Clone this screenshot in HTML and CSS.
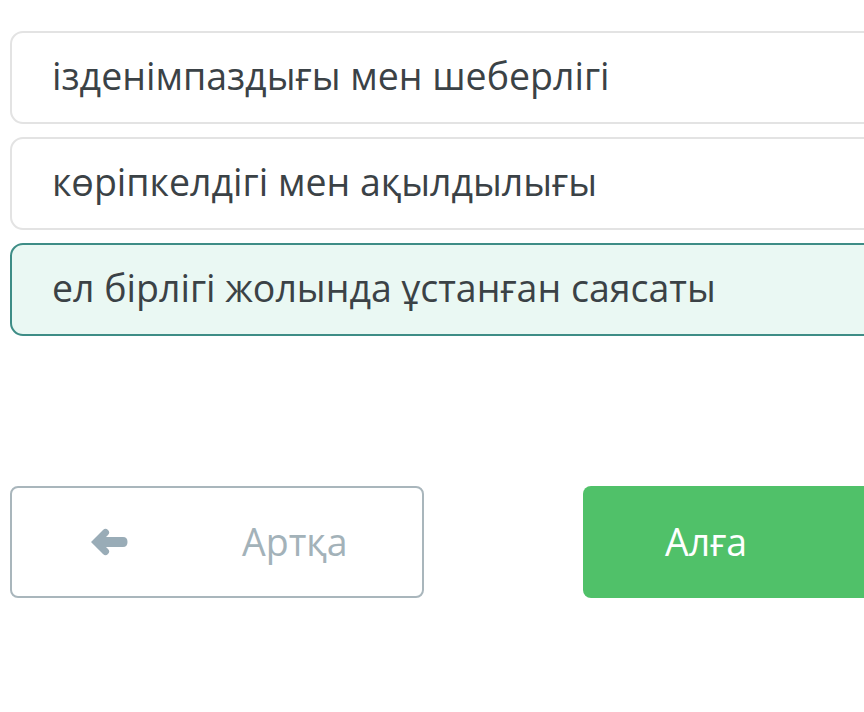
FILE: index.html
```html
<!DOCTYPE html>
<html>
<head>
<meta charset="utf-8">
<link rel="stylesheet" href="styles.css">
</head>
<body>
<div class="page">
  <div class="options">
    <div class="option">ізденімпаздығы мен шеберлігі</div>
    <div class="option">көріпкелдігі мен ақылдылығы</div>
    <div class="option selected">ел бірлігі жолында ұстанған саясаты</div>
  </div>
  <div class="nav">
    <button class="btn back">
      <svg class="arrow" viewBox="0 0 38 34" width="38" height="34"><path d="M1 17 L13 5 Q15.5 2.5 18 5 Q20.5 7.5 18 10 L16 12 H33 Q37.5 12 37.5 17 Q37.5 22 33 22 H16 L18 24 Q20.5 26.5 18 29 Q15.5 31.5 13 29 Z" fill="#99acb7"/></svg>
      <span class="label">Артқа</span>
    </button>
    <button class="btn next"><span class="label">Алға</span></button>
  </div>
</div>
</body>
</html>
```
FILE: styles.css
```css
html, body {
  margin: 0;
  padding: 0;
  background: #ffffff;
  overflow: hidden;
  width: 864px;
  height: 712px;
}
.page {
  font-family: "Open Sans", "Noto Sans", sans-serif;
  padding: 31px 0 0 10px;
  width: 1000px;
}
.options {
  display: flex;
  flex-direction: column;
  gap: 13px;
}
.option {
  box-sizing: border-box;
  height: 93px;
  border: 2px solid #e3e3e3;
  border-radius: 13px;
  background: #fff;
  display: flex;
  align-items: center;
  padding: 0 0 4px 40px;
  font-size: 37.5px;
  color: #3b4246;
}
.option.selected {
  border-color: #3e8d86;
  background: #eaf8f3;
}
.nav {
  display: flex;
  margin-top: 150px;
  gap: 159px;
}
.btn {
  box-sizing: border-box;
  flex-shrink: 0;
  height: 112px;
  border-radius: 8px;
  font-family: "Open Sans", "Noto Sans", sans-serif;
  font-size: 37.5px;
  display: flex;
  align-items: center;
  padding: 0 0 2px 0;
}
.back {
  width: 414px;
  border: 2px solid #a9b6bc;
  background: #fff;
  color: #a3b2b9;
  padding-left: 78px;
}
.back .arrow {
  margin-right: 114px;
  margin-top: 2px;
}
.next {
  width: 400px;
  border: none;
  background: #50c169;
  color: #ffffff;
  padding-left: 82px;
}
```
